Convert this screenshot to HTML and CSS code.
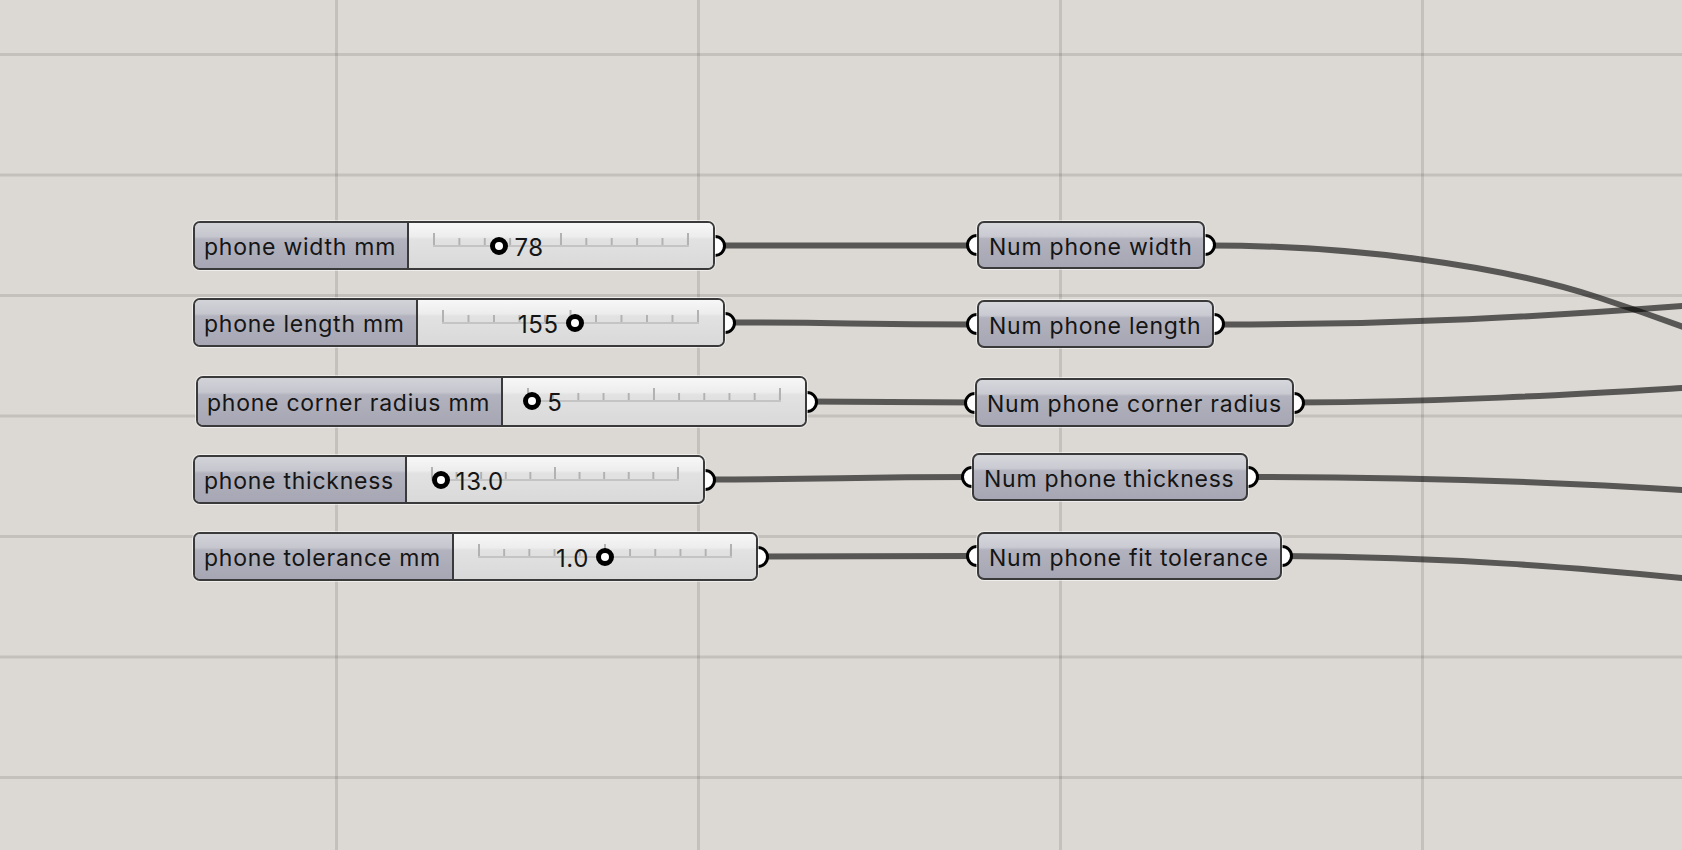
FILE: index.html
```html
<!DOCTYPE html>
<html lang="en">
<head>
<meta charset="utf-8">
<title>Phone parameters</title>
<link rel="stylesheet" href="styles.css">
</head>
<body>
<div class="canvas">
  <svg class="wires" width="1682" height="850" viewBox="0 0 1682 850">
    <path d="M715 245.5 L977 245.5"/>
    <path d="M725 322.5 C850 322.5 850 324.5 977 324.5"/>
    <path d="M807 401.5 C890 401.5 890 402.5 975 402.5"/>
    <path d="M705 479.5 C840 479.5 840 477 972 477"/>
    <path d="M758 556.5 C860 556.5 860 556 977 556"/>
    <path d="M1205 245.5 C1350 245 1500 265 1600 298 S1720 342 1800 370"/>
    <path d="M1214 324.5 C1400 325 1550 316 1682 306 S1800 294 1900 285"/>
    <path d="M1294 402.5 C1450 402 1580 394 1682 388 S1800 380 1900 372"/>
    <path d="M1248 477 C1420 477 1560 482 1682 490 S1800 500 1900 510"/>
    <path d="M1282 556 C1450 557 1580 568 1682 578 S1800 592 1900 605"/>
  </svg>

  <div class="node slider" id="s1">
    <div class="body">
      <div class="label">phone width mm</div>
      <div class="value">
        <div class="track">
          <div class="grip" style="left:25.9%"><span class="num after">78</span></div>
        </div>
      </div>
    </div>
    <span class="port out"></span>
  </div>

  <div class="node slider" id="s2">
    <div class="body">
      <div class="label">phone length mm</div>
      <div class="value">
        <div class="track">
          <div class="grip" style="left:51.7%"><span class="num before">155</span></div>
        </div>
      </div>
    </div>
    <span class="port out"></span>
  </div>

  <div class="node slider" id="s3">
    <div class="body">
      <div class="label">phone corner radius mm</div>
      <div class="value">
        <div class="track">
          <div class="grip" style="left:2%"><span class="num after">5</span></div>
        </div>
      </div>
    </div>
    <span class="port out"></span>
  </div>

  <div class="node slider" id="s4">
    <div class="body">
      <div class="label">phone thickness</div>
      <div class="value">
        <div class="track">
          <div class="grip" style="left:4%"><span class="num after">13.0</span></div>
        </div>
      </div>
    </div>
    <span class="port out"></span>
  </div>

  <div class="node slider" id="s5">
    <div class="body">
      <div class="label">phone tolerance mm</div>
      <div class="value">
        <div class="track">
          <div class="grip" style="left:50%"><span class="num before">1.0</span></div>
        </div>
      </div>
    </div>
    <span class="port out"></span>
  </div>

  <div class="node param" id="n1">
    <span class="port in"></span>
    <div class="body">Num phone width</div>
    <span class="port out"></span>
  </div>
  <div class="node param" id="n2">
    <span class="port in"></span>
    <div class="body">Num phone length</div>
    <span class="port out"></span>
  </div>
  <div class="node param" id="n3">
    <span class="port in"></span>
    <div class="body">Num phone corner radius</div>
    <span class="port out"></span>
  </div>
  <div class="node param" id="n4">
    <span class="port in"></span>
    <div class="body">Num phone thickness</div>
    <span class="port out"></span>
  </div>
  <div class="node param" id="n5">
    <span class="port in"></span>
    <div class="body">Num phone fit tolerance</div>
    <span class="port out"></span>
  </div>
</div>
</body>
</html>
```

FILE: styles.css
```css
* { box-sizing: border-box; }

html, body {
  margin: 0;
  padding: 0;
  background: #dcd9d4;
}

.canvas {
  position: relative;
  width: 1682px;
  height: 850px;
  overflow: hidden;
  background-color: #dcd9d4;
  background-image:
    linear-gradient(90deg, rgba(0,0,0,0.11) 3px, transparent 3px),
    linear-gradient(180deg, rgba(0,0,0,0.11) 3px, transparent 3px);
  background-size: 362px 100%, 100% 120.5px;
  background-position: 335px 0, 0 53px;
  font-family: "Inter", "Liberation Sans", sans-serif;
  font-size: 23px;
  letter-spacing: 0.75px;
  color: #151515;
}

.wires {
  position: absolute;
  left: 0;
  top: 0;
}
.wires path {
  fill: none;
  stroke: rgba(0,0,0,0.6);
  stroke-width: 6;
}

/* generic node */
.node {
  position: absolute;
  isolation: isolate;
  height: 49px;
}
.node .body {
  position: relative;
  z-index: 1;
  height: 100%;
  border: 2px solid #3a3a3a;
  border-radius: 7px;
  box-shadow: 0 0 0 1px rgba(255,255,255,0.55);
  overflow: hidden;
}

.port {
  position: absolute;
  z-index: 0;
  top: 50%;
  width: 22px;
  height: 22px;
  margin-top: -11px;
  border-radius: 50%;
  background: #fff;
  border: 3.5px solid #000;
}
.port.out { right: -11px; }
.port.in { left: -11px; }

/* slider */
.slider .body {
  display: flex;
}
.slider .label {
  flex: none;
  display: flex;
  align-items: center;
  padding: 3px 11px 0 9px;
  border-right: 2px solid #3a3a3a;
  background: linear-gradient(180deg, #d2d2d9 0%, #c6c6ce 30%, #b3b3bf 36%, #a6a6b4 100%);
  white-space: nowrap;
}
.slider .value {
  flex: 1;
  position: relative;
  background: linear-gradient(180deg, #f7f7f7 0%, #ededed 30%, #e2e2e2 36%, #d9d9d9 100%);
}
.track {
  position: absolute;
  left: 24px;
  right: 24px;
  top: 10px;
  height: 14px;
  border-bottom: 2px solid #c4c4c4;
  background-image:
    linear-gradient(90deg, #b2b2b2 2px, transparent 2px),
    linear-gradient(90deg, #b2b2b2 2px, transparent 2px);
  background-size: calc((100% - 2px) / 10) 7px, calc((100% - 2px) / 2) 14px;
  background-repeat: repeat-x;
  background-position: 0 100%, 0 100%;
}
.grip {
  position: absolute;
  bottom: -10px;
  width: 18px;
  height: 18px;
  margin-left: -9px;
  border-radius: 50%;
  background: #fff;
  border: 5px solid #000;
}
.num {
  position: absolute;
  top: 50%;
  transform: translateY(-40%);
  font-size: 24px;
  line-height: 1;
  letter-spacing: 0.6px;
  white-space: nowrap;
}
.num.after { left: 19px; }
.num.before { right: 20px; }

/* number param */
.param { height: 48px; }
.param .body {
  display: flex;
  align-items: center;
  padding: 3px 12px 0 10px;
  background: linear-gradient(180deg, #d6d6dd 0%, #cacad2 30%, #b3b3bf 36%, #a6a6b4 100%);
  white-space: nowrap;
}

/* node placement on the canvas */
#s1 { left: 193px; top: 221px; width: 522px; }
#s2 { left: 193px; top: 298px; width: 532px; }
#s3 { left: 196px; top: 376px; width: 611px; height: 51px; }
#s4 { left: 193px; top: 455px; width: 512px; }
#s5 { left: 193px; top: 532px; width: 565px; }

#n1 { left: 977px; top: 221px; width: 228px; }
#n2 { left: 977px; top: 300px; width: 237px; }
#n3 { left: 975px; top: 378px; width: 319px; height: 49px; }
#n4 { left: 972px; top: 453px; width: 276px; }
#n5 { left: 977px; top: 532px; width: 305px; }
```
